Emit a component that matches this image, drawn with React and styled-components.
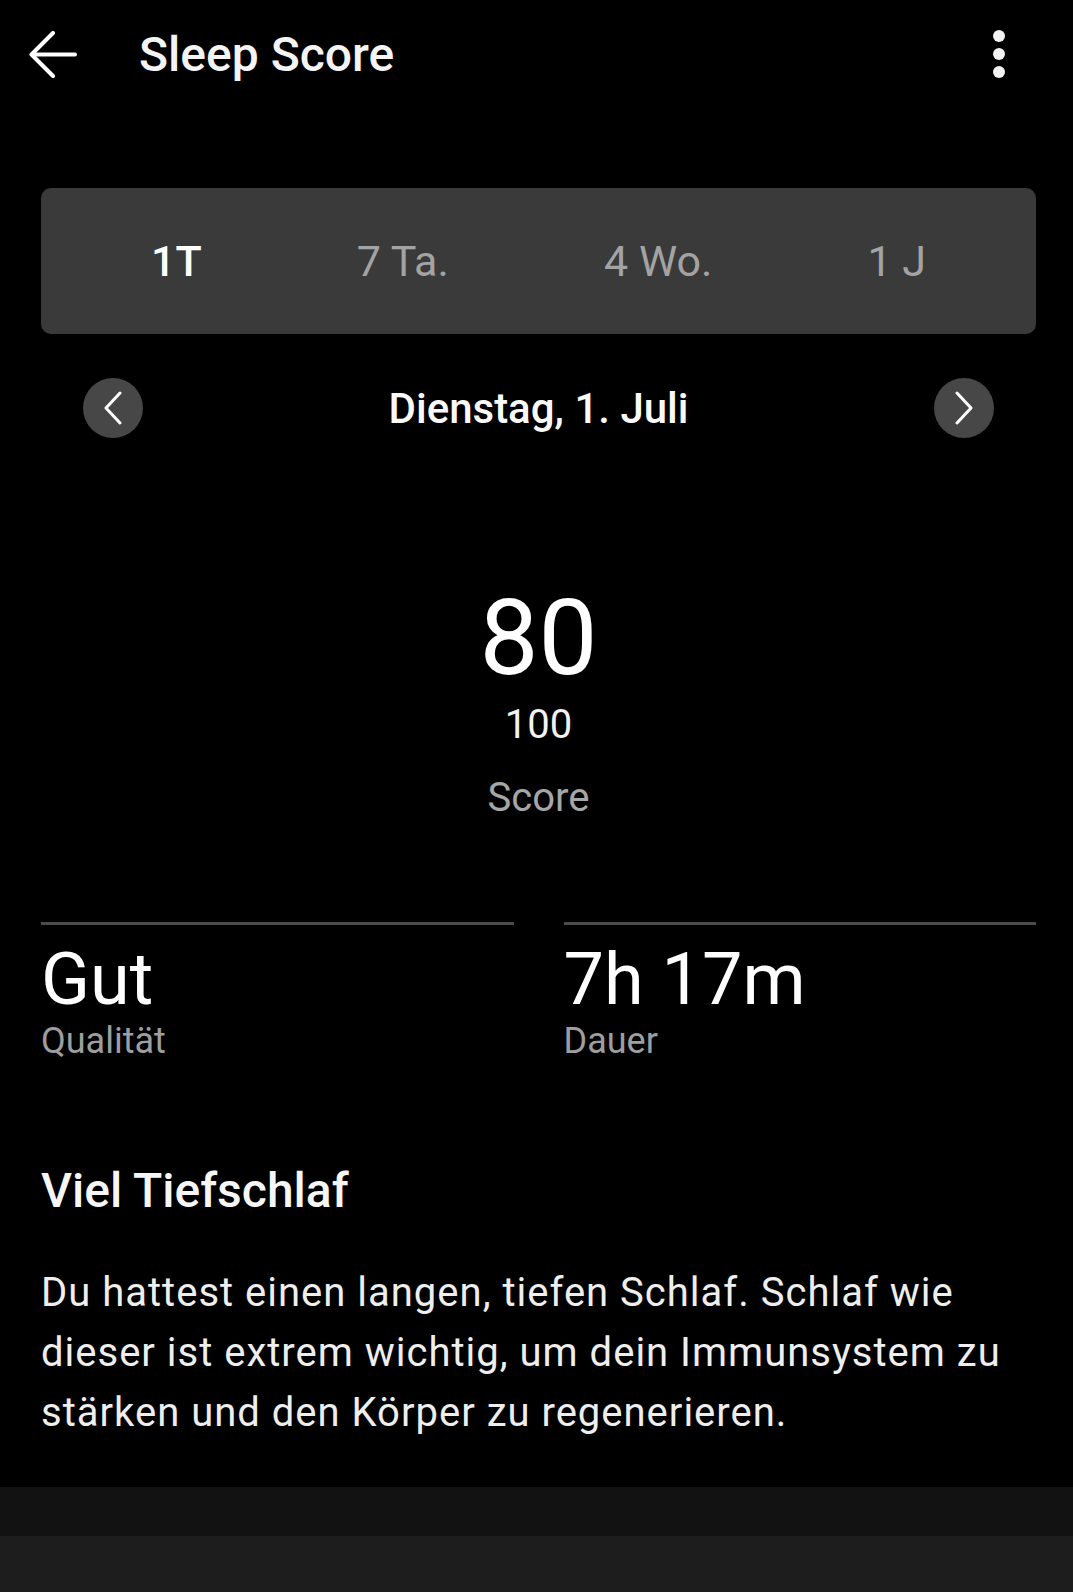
import React from 'react';
import styled, { createGlobalStyle } from 'styled-components';

const GlobalStyle = createGlobalStyle`
  html, body {
    margin: 0;
    padding: 0;
    background: #000;
  }
  body {
    font-family: Roboto, "Noto Sans", "Liberation Sans", sans-serif;
    color: #fff;
  }
`;

const ranges = ['1T', '7 Ta.', '4 Wo.', '1 J'];

function App() {
    return (
        <>
            <GlobalStyle />
            <Screen>
                <Header>
                    <IconButton aria-label="back">
                        <svg width="48" height="48" viewBox="0 0 48 48" fill="none" stroke="#fff" strokeWidth="4" strokeLinecap="round" strokeLinejoin="round">
                            <path d="M46 23.5H3" />
                            <path d="M24 2L2.5 23.5L24 45" />
                        </svg>
                    </IconButton>
                    <Title>Sleep Score</Title>
                    <Kebab aria-label="more">
                        <Dot />
                        <Dot />
                        <Dot />
                    </Kebab>
                </Header>

                <Content>
                    <RangeTabs>
                        {ranges.map((r, i) => (
                            <RangeTab key={r} $active={i === 0}>{r}</RangeTab>
                        ))}
                    </RangeTabs>

                    <DateRow>
                        <RoundButton aria-label="previous">
                            <svg width="20" height="34" viewBox="0 0 20 34" fill="none" stroke="#fff" strokeWidth="3" strokeLinecap="round" strokeLinejoin="round">
                                <path d="M17 2L3 17L17 32" />
                            </svg>
                        </RoundButton>
                        <DateLabel>Dienstag, 1. Juli</DateLabel>
                        <RoundButton aria-label="next">
                            <svg width="20" height="34" viewBox="0 0 20 34" fill="none" stroke="#fff" strokeWidth="3" strokeLinecap="round" strokeLinejoin="round">
                                <path d="M3 2L17 17L3 32" />
                            </svg>
                        </RoundButton>
                    </DateRow>

                    <ScoreBlock>
                        <ScoreValue>80</ScoreValue>
                        <ScoreMax>100</ScoreMax>
                        <ScoreLabel>Score</ScoreLabel>
                    </ScoreBlock>

                    <Stats>
                        <Stat>
                            <StatValue>Gut</StatValue>
                            <StatLabel>Qualität</StatLabel>
                        </Stat>
                        <Stat>
                            <StatValue>7h 17m</StatValue>
                            <StatLabel>Dauer</StatLabel>
                        </Stat>
                    </Stats>

                    <InsightTitle>Viel Tiefschlaf</InsightTitle>
                    <InsightText>
                        Du hattest einen langen, tiefen Schlaf. Schlaf wie dieser ist extrem wichtig, um dein Immunsystem zu stärken und den Körper zu regenerieren.
                    </InsightText>
                </Content>

                <Band />
                <Panel />
            </Screen>
        </>
    );
}

const Screen = styled.div`
    width: 1073px;
    height: 1592px;
    overflow: hidden;
    background: #000;
`;

const Header = styled.div`
    height: 110px;
    display: flex;
    align-items: center;
    padding: 0 68px 0 29px;
    box-sizing: border-box;
`;

const IconButton = styled.div`
    width: 48px;
    height: 48px;
    display: flex;
    align-items: center;
    justify-content: center;
`;

const Title = styled.div`
    margin-left: 62px;
    font-size: 48px;
    line-height: 56px;
    font-weight: 500;
    color: #f4f4f4;
`;

const Kebab = styled.div`
    margin-left: auto;
    width: 12px;
    display: flex;
    flex-direction: column;
    gap: 6px;
    margin-top: -2px;
`;

const Dot = styled.span`
    width: 12px;
    height: 12px;
    border-radius: 50%;
    background: #f2f2f2;
`;

const Content = styled.div`
    padding: 78px 37px 0 41px;
    height: 1377px;
    box-sizing: border-box;
    display: flex;
    flex-direction: column;
`;

const RangeTabs = styled.div`
    flex-shrink: 0;
    height: 146px;
    border-radius: 10px;
    background: #3a3a3a;
    display: flex;
    justify-content: space-between;
    align-items: center;
    padding: 0 110px;
`;

const RangeTab = styled.div`
    font-size: 43px;
    font-weight: ${p => (p.$active ? 500 : 400)};
    color: ${p => (p.$active ? '#ffffff' : '#a3a3a3')};
`;

const DateRow = styled.div`
    flex-shrink: 0;
    margin-top: 44px;
    height: 60px;
    display: flex;
    align-items: center;
    justify-content: space-between;
    padding: 0 42px;
`;

const RoundButton = styled.div`
    width: 60px;
    height: 60px;
    border-radius: 50%;
    background: #474747;
    display: flex;
    align-items: center;
    justify-content: center;
`;

const DateLabel = styled.div`
    font-size: 42px;
    font-weight: 500;
    color: #fafafa;
`;

const ScoreBlock = styled.div`
    margin-top: 148px;
    display: flex;
    flex-direction: column;
    align-items: center;
`;

const ScoreValue = styled.div`
    font-size: 105px;
    line-height: 1;
    color: #fff;
`;

const ScoreMax = styled.div`
    margin-top: 14px;
    font-size: 40px;
    line-height: 1;
    color: #f2f2f2;
`;

const ScoreLabel = styled.div`
    margin-top: 33px;
    font-size: 40px;
    line-height: 1;
    color: #a6a6a6;
`;

const Stats = styled.div`
    margin-top: 104px;
    display: grid;
    grid-template-columns: 1fr 1fr;
    column-gap: 50px;
`;

const Stat = styled.div`
    border-top: 3px solid #4b4b4b;
    padding-top: 19px;
    display: flex;
    flex-direction: column;
`;

const StatValue = styled.div`
    font-size: 72px;
    line-height: 1;
    color: #fff;
`;

const StatLabel = styled.div`
    margin-top: 7px;
    font-size: 36px;
    line-height: 1;
    color: #9e9e9e;
`;

const InsightTitle = styled.div`
    margin-top: 108px;
    font-size: 48px;
    line-height: 1;
    font-weight: 500;
    color: #f6f6f6;
`;

const InsightText = styled.p`
    margin: 48px 0 0 0;
    font-size: 40px;
    line-height: 60px;
    letter-spacing: 1px;
    color: #eeeeee;
`;

const Band = styled.div`
    height: 49px;
    background: #121212;
`;

const Panel = styled.div`
    height: 56px;
    background: #1d1d1d;
`;

export default App;
